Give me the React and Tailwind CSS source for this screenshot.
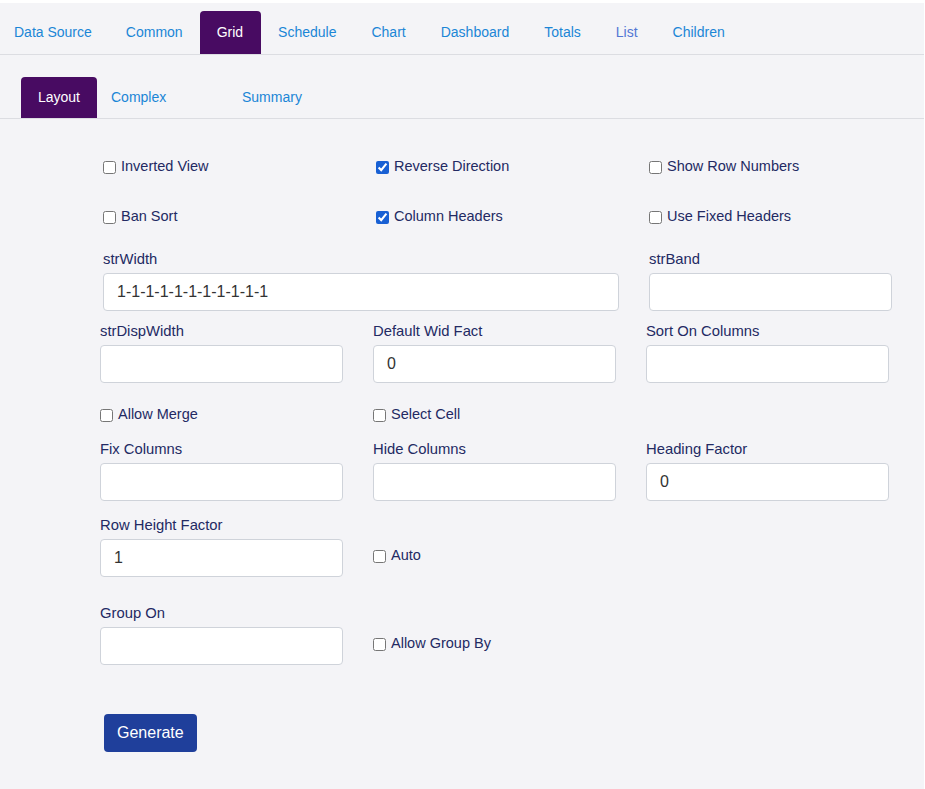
import { useState } from "react";

const topTabs = [
  { name: "Data Source", cls: "pl-[14px] pr-[17px]" },
  { name: "Common", cls: "px-[17px]" },
  { name: "Grid", cls: "pl-[17px] pr-[17.5px]", active: true },
  { name: "Schedule", cls: "px-[17.5px]" },
  { name: "Chart", cls: "px-[17.5px]" },
  { name: "Dashboard", cls: "px-[17.5px]" },
  { name: "Totals", cls: "px-[17.5px]" },
  { name: "List", cls: "px-[17.5px]", visited: true },
  { name: "Children", cls: "px-[17.5px]" },
];

function Check({ label, checked }) {
  return (
    <label className="flex h-[20px] items-center gap-[5px] text-[14.5px] text-[#232a63]">
      <input
        type="checkbox"
        defaultChecked={checked}
        className="m-0 h-[13px] w-[13px] accent-[#1860d4]"
      />
      <span>{label}</span>
    </label>
  );
}

function Field({ label, value = "", span = "" }) {
  return (
    <div className={`flex flex-col ${span}`}>
      <div className="mb-[4px] h-[20px] text-[14.8px] leading-[20px] text-[#232a63]">
        {label}
      </div>
      <input
        type="text"
        defaultValue={value}
        className="h-[38px] w-full rounded-[4px] border border-[#cfd3da] bg-white px-[13px] text-[16px] text-[#333] outline-0"
      />
    </div>
  );
}

export default function App() {
  const [tab, setTab] = useState("Grid");
  const [subTab, setSubTab] = useState("Layout");

  return (
    <div className="min-h-screen bg-white font-['Liberation_Sans',Arial,sans-serif]">
      <div className="mt-[3px] mr-[1px] min-h-[786px] bg-[#f4f4f7]">
        <nav className="flex border-b border-[#dcdde2] pt-[8px]">
          {topTabs.map((t) => (
            <button
              key={t.name}
              onClick={() => setTab(t.name)}
              className={`flex h-[43px] items-center rounded-t-[4px] text-[14px] ${t.cls} ${
                tab === t.name
                  ? "bg-[#480b62] text-white"
                  : t.visited
                    ? "text-[#5277d4]"
                    : "text-[#1b86d6]"
              }`}
            >
              {t.name}
            </button>
          ))}
        </nav>

        <nav className="flex border-b border-[#dcdde2] pl-[21px] pt-[22px]">
          <button
            onClick={() => setSubTab("Layout")}
            className={`flex h-[41px] w-[76px] items-center justify-center rounded-t-[4px] text-[14px] ${
              subTab === "Layout" ? "bg-[#480b62] text-white" : "text-[#1b86d6]"
            }`}
          >
            Layout
          </button>
          <button
            onClick={() => setSubTab("Complex")}
            className={`flex h-[41px] w-[131px] items-center rounded-t-[4px] pl-[14px] text-[14px] ${
              subTab === "Complex" ? "bg-[#480b62] text-white" : "text-[#1b86d6]"
            }`}
          >
            Complex
          </button>
          <button
            onClick={() => setSubTab("Summary")}
            className={`flex h-[41px] items-center rounded-t-[4px] px-[14px] text-[14px] ${
              subTab === "Summary" ? "bg-[#480b62] text-white" : "text-[#1b86d6]"
            }`}
          >
            Summary
          </button>
        </nav>

        <div className="pl-[100px] pt-[38px]">
          {/* first block sits a few px to the right */}
          <div className="grid grid-cols-[243px_243px_243px] gap-x-[30px] pl-[3px]">
            <Check label="Inverted View" />
            <Check label="Reverse Direction" checked />
            <Check label="Show Row Numbers" />
          </div>
          <div className="mt-[30px] grid grid-cols-[243px_243px_243px] gap-x-[30px] pl-[3px]">
            <Check label="Ban Sort" />
            <Check label="Column Headers" checked />
            <Check label="Use Fixed Headers" />
          </div>
          <div className="mt-[22px] grid grid-cols-[243px_243px_243px] gap-x-[30px] pl-[3px]">
            <Field label="strWidth" value="1-1-1-1-1-1-1-1-1-1-1" span="col-span-2" />
            <Field label="strBand" />
          </div>

          <div className="mt-[10px] grid grid-cols-[243px_243px_243px] gap-x-[30px]">
            <Field label="strDispWidth" />
            <Field label="Default Wid Fact" value="0" />
            <Field label="Sort On Columns" />
          </div>

          <div className="mt-[22px] grid grid-cols-[243px_243px_243px] gap-x-[30px]">
            <Check label="Allow Merge" />
            <Check label="Select Cell" />
          </div>

          <div className="mt-[14px] grid grid-cols-[243px_243px_243px] gap-x-[30px]">
            <Field label="Fix Columns" />
            <Field label="Hide Columns" />
            <Field label="Heading Factor" value="0" />
          </div>

          <div className="mt-[14px] grid grid-cols-[243px_243px_243px] gap-x-[30px]">
            <Field label="Row Height Factor" value="1" />
            <div className="mt-[24px] flex h-[34px] items-center">
              <Check label="Auto" />
            </div>
          </div>

          <div className="mt-[26px] grid grid-cols-[243px_243px_243px] gap-x-[30px]">
            <Field label="Group On" />
            <div className="mt-[24px] flex h-[34px] items-center">
              <Check label="Allow Group By" />
            </div>
          </div>

          <button className="ml-[4px] mt-[49px] h-[38px] rounded-[4px] bg-[#1f3f9b] px-[13px] text-[16px] text-white">
            Generate
          </button>
        </div>
      </div>
    </div>
  );
}
